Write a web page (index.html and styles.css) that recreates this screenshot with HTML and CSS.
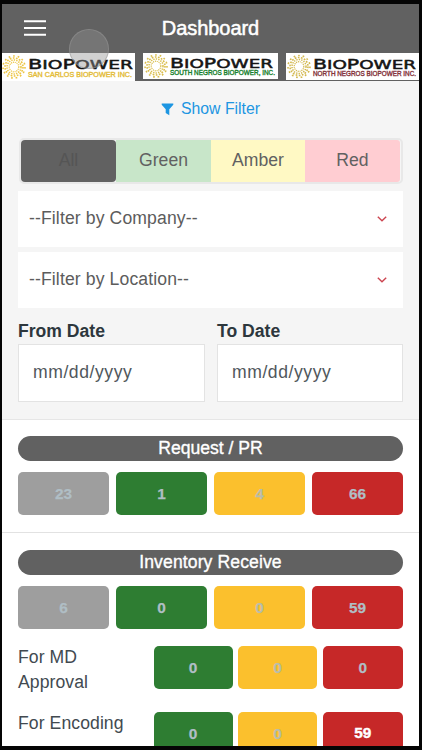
FILE: index.html
```
<!DOCTYPE html>
<html lang="en">
<head>
<meta charset="utf-8">
<title>Dashboard</title>
<link rel="stylesheet" href="styles.css">
</head>
<body>
<svg width="0" height="0" class="defs" aria-hidden="true">
  <symbol id="sun" viewBox="0 0 24 24">
    <g fill="none" stroke="currentColor">
      <circle cx="12" cy="12" r="4.8" stroke-width="1.2" stroke-dasharray="1.1 .8"/>
      <circle cx="12" cy="12" r="7" stroke-width="1.5" stroke-dasharray="1.4 1.1"/>
      <circle cx="12" cy="12" r="9" stroke-width="1.6" stroke-dasharray="1.7 1.45"/>
      <circle cx="12" cy="12" r="11" stroke-width="1.6" stroke-dasharray="1.7 2.9"/>
    </g>
  </symbol>
</svg>
<div class="phone">
  <header class="bar">
    <svg class="menu" viewBox="0 0 22 16"><path d="M0 1.2h22M0 8h22M0 14.8h22" stroke="#fff" stroke-width="2"/></svg>
    <h1>Dashboard</h1>
    <span class="touch"></span>
  </header>
  <div class="logos">
    <svg class="logo first" viewBox="0 0 133 28">
      <use href="#sun" x="0" y="2" width="24" height="24" color="#ecc544"/>
      <text class="brand" y="16" x="26" textLength="105" lengthAdjust="spacingAndGlyphs"><tspan class="cap">B</tspan>IO<tspan class="cap">P</tspan>OWER</text>
      <text class="sub yellow" x="26" y="24" textLength="104" lengthAdjust="spacingAndGlyphs">SAN CARLOS BIOPOWER INC.</text>
    </svg>
    <svg class="logo second" viewBox="0 0 135 26">
      <use href="#sun" x="1" y="1" width="24" height="24" color="#d9bd4c"/>
      <text class="brand" y="15" x="27" textLength="103" lengthAdjust="spacingAndGlyphs"><tspan class="cap">B</tspan>IO<tspan class="cap">P</tspan>OWER</text>
      <text class="sub green-text" x="27" y="22" textLength="105" lengthAdjust="spacingAndGlyphs">SOUTH NEGROS BIOPOWER, INC.</text>
    </svg>
    <svg class="logo third" viewBox="0 0 133 27">
      <use href="#sun" x="1" y="1.5" width="24" height="24" color="#d3b84e"/>
      <text class="brand" y="15.7" x="27" textLength="103" lengthAdjust="spacingAndGlyphs"><tspan class="cap">B</tspan>IO<tspan class="cap">P</tspan>OWER</text>
      <text class="sub maroon" x="27" y="22.5" textLength="103" lengthAdjust="spacingAndGlyphs">NORTH NEGROS BIOPOWER INC.</text>
    </svg>
  </div>

  <section class="filters">
    <a class="show"><svg viewBox="0 0 12 13"><path d="M.2.5h11.6v1.2L7.8 6.3v6L4.2 10V6.3L.2 1.7z" fill="currentColor"/></svg><span>Show Filter</span></a>
    <div class="segment">
      <span class="all">All</span><span class="lgreen">Green</span><span class="lamber">Amber</span><span class="lred">Red</span>
    </div>
    <div class="select"><span>--Filter by Company--</span><svg viewBox="0 0 10 6"><path d="M.8.8 5 4.8 9.2.8"/></svg></div>
    <div class="select"><span>--Filter by Location--</span><svg viewBox="0 0 10 6"><path d="M.8.8 5 4.8 9.2.8"/></svg></div>
    <div class="dates">
      <div><label>From Date</label><div class="date">mm/dd/yyyy</div></div>
      <div><label>To Date</label><div class="date">mm/dd/yyyy</div></div>
    </div>
  </section>

  <section class="group request">
    <h2>Request / PR</h2>
    <div class="counts"><b class="gray">23</b><b class="green">1</b><b class="amber">4</b><b class="red">66</b></div>
  </section>

  <section class="group">
    <h2 class="inventory">Inventory Receive</h2>
    <div class="counts"><b class="gray">6</b><b class="green">0</b><b class="amber">0</b><b class="red">59</b></div>
    <div class="line"><span>For MD Approval</span><b class="green">0</b><b class="amber">0</b><b class="red">0</b></div>
    <div class="line"><span>For Encoding</span><b class="green">0</b><b class="amber">0</b><b class="red strong">59</b></div>
  </section>
</div>
</body>
</html>
```

FILE: styles.css
```
* { box-sizing: border-box; }
body { margin: 0; background: #000; font-family: "Liberation Sans", Arial, sans-serif; font-size: 17.6px; color: #424a50; }
.defs { display: block; }
.phone { width: 422px; height: 750px; border: solid #050505; border-width: 4px 3px 4px 2px; background: #fff; overflow: hidden; }

.bar { position: relative; height: 49px; background: #616161; display: flex; align-items: center; justify-content: center; }
.bar h1 { margin: 0; font-size: 20px; font-weight: 400; color: #fff; line-height: 49px; letter-spacing: -.05px; -webkit-text-stroke: .5px #fff; }
.menu { position: absolute; left: 22px; top: 16px; width: 22px; height: 16px; }
.touch { position: absolute; left: 67px; top: 25px; width: 40px; height: 40px; border-radius: 50%; background: rgba(145,145,145,.42); border: 1px solid rgba(150,150,150,.5); z-index: 2; }

.logos { height: 28px; background: #616161; display: flex; align-items: flex-start; }
.logo { display: block; background: #fff; flex: none; overflow: hidden; }
.first { width: 133px; height: 28px; }
.second { width: 135px; height: 26px; margin-left: 8px; }
.third { width: 133px; height: 27px; margin-left: 8px; }
.brand { font-family: "DejaVu Sans", sans-serif; font-size: 13px; fill: #151515; stroke: #151515; stroke-width: .5px; }
.cap { font-size: 14.5px; }
.sub { font-size: 6.6px; stroke-width: .35px; }
.yellow { fill: #e4bd3a; stroke: #e4bd3a; }
.green-text { fill: #16802c; stroke: #16802c; }
.maroon { fill: #84323a; stroke: #84323a; }

.filters { height: 339px; background: #f5f5f5; border-bottom: 1px solid #e6e6e6; padding: 19px 16px 0; }
.show { display: flex; justify-content: center; align-items: center; height: 18px; gap: 7px; color: #1d96e2; font-size: 15.8px; }
.show svg { width: 13px; height: 13px; }
.segment { margin: 20px 0 0 1px; height: 46px; display: grid; grid-template-columns: 95px 95px 94px 95px; border: 2px solid #e8e8e8; border-radius: 5px; line-height: 41px; text-align: center; color: #616161; }
.all { background: #616161; border-radius: 4px; color: #555; }
.lgreen { background: #c8e6c9; }
.lamber { background: #fff9c4; }
.lred { background: #ffcdd2; border-radius: 0 3px 3px 0; }
.select { margin-top: 7px; height: 56px; background: #fff; display: flex; align-items: center; justify-content: space-between; padding: 0 16px 1px 11px; color: #5c5c5c; font-size: 17.6px; letter-spacing: .12px; }
.select + .select { margin-top: 5px; }
.select svg { width: 10px; height: 6px; fill: none; stroke: #cc4550; stroke-width: 1.4; }
.dates { display: grid; grid-template-columns: 187px 186px; gap: 12px; margin-top: 13px; }
.dates label { display: block; height: 23px; line-height: 21px; font-weight: 700; color: #2d373d; }
.date { height: 58px; border: 1px solid #e3e3e3; background: #fff; line-height: 55px; padding-left: 14px; color: #50575c; font-size: 17.6px; letter-spacing: .55px; }

.group { padding: 17px 16px 0; }
.request { height: 113px; padding-top: 16px; border-bottom: 1px solid #e2e2e2; }
.group h2 { margin: 0; height: 25px; line-height: 24px; border-radius: 13px; background: #616161; color: #fff; font-size: 17.6px; font-weight: 400; text-align: center; -webkit-text-stroke: .35px #fff; }
.group h2.inventory { letter-spacing: .1px; }
.counts { display: grid; grid-template-columns: repeat(4, 1fr); gap: 7px; margin-top: 11px; }
b { height: 43px; line-height: 44px; border-radius: 5px; text-align: center; font-size: 15.4px; color: #b0bec5; -webkit-text-stroke: .25px; }
.gray { background: #9e9e9e; }
.green { background: #2e7d32; }
.amber { background: #fbc02d; color: #b8bdac; }
.red { background: #c62828; }
.strong { color: #fff; -webkit-text-stroke: .4px #fff; line-height: 42px; }
.line { display: grid; grid-template-columns: 130px 79px 79px 80px; column-gap: 5.6px; margin-top: 17px; height: 49px; line-height: 24.5px; letter-spacing: .08px; }
.line span { padding-right: 20px; margin-top: -1px; }
.line + .line span { padding-right: 0; }
```
